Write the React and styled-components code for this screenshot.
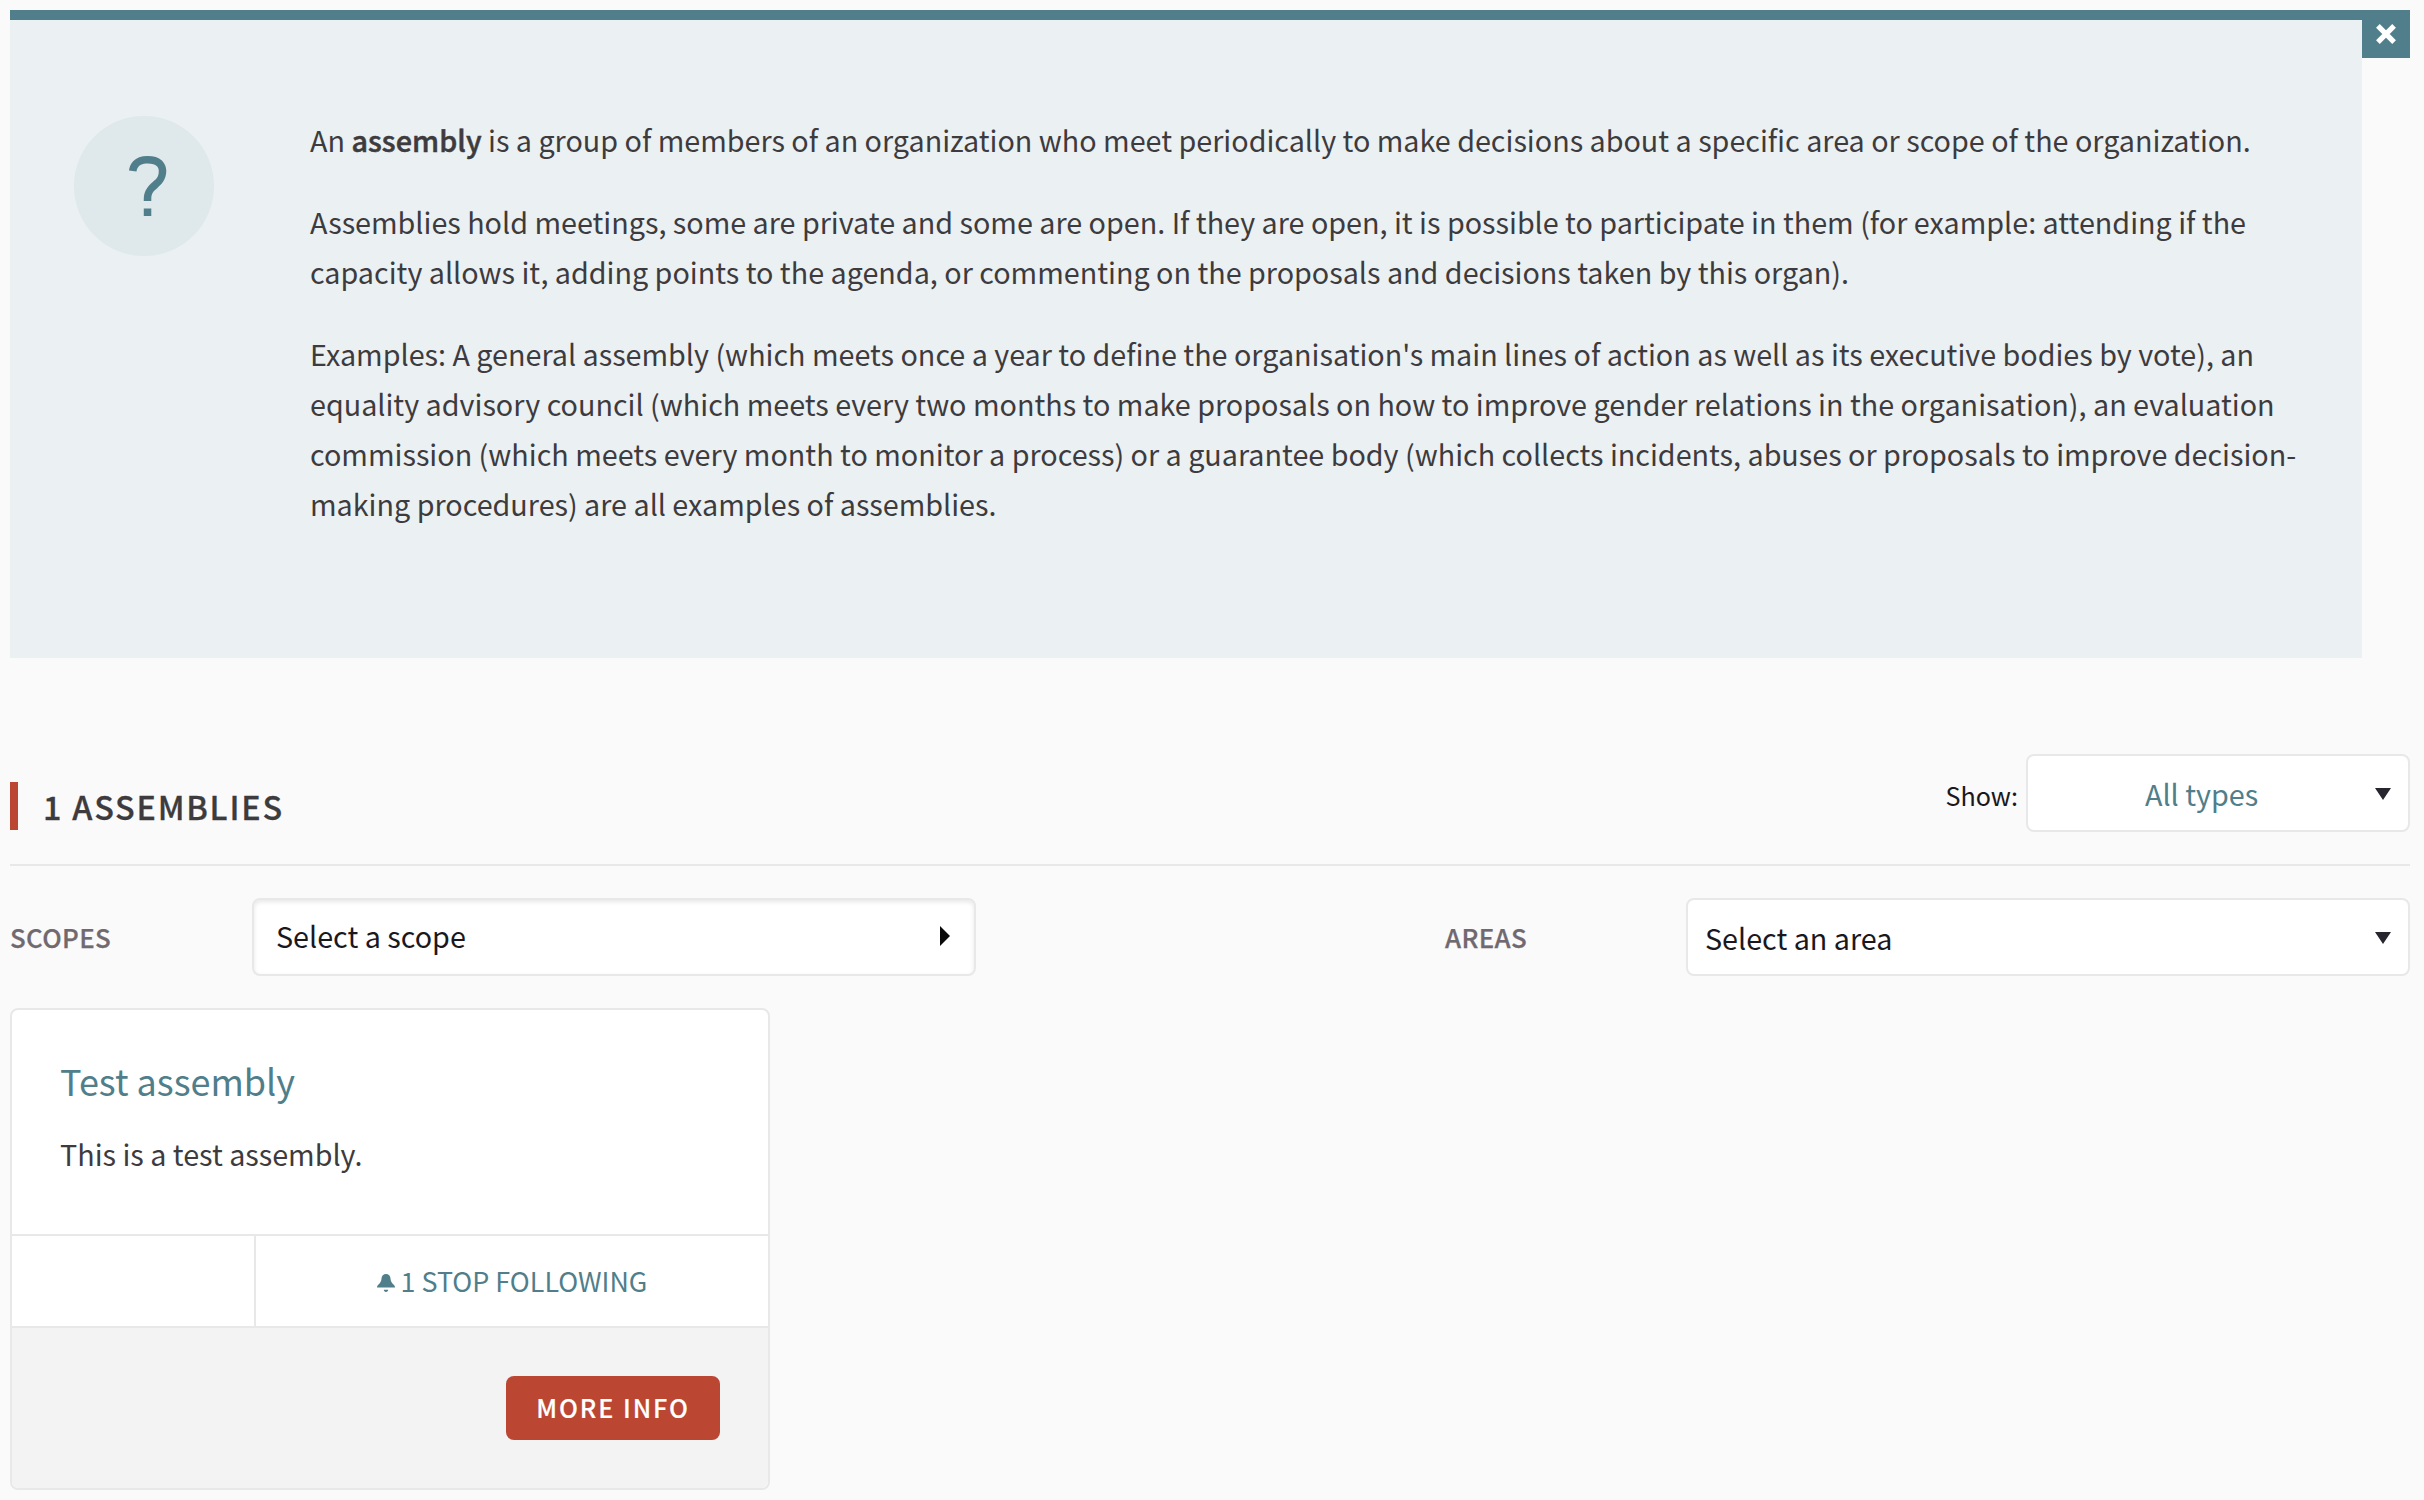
import React from 'react';
import styled, { createGlobalStyle } from 'styled-components';

const color = {
  page: '#fafafa',
  teal: '#507e8a',
  tint: '#ebf0f3',
  tintDark: '#dfe8ea',
  red: '#bb4632',
  text: '#3d3b3d',
  dark: '#1a181d',
  muted: '#716970',
  border: '#e8e8e8',
  footer: '#f3f3f3',
};

const GlobalStyle = createGlobalStyle`
  *, *::before, *::after { box-sizing: border-box; }
  body {
    margin: 0;
    background: ${color.page};
    color: ${color.text};
    font-family: "Noto Sans CJK SC", "Noto Sans", sans-serif;
    font-size: 28.72px;
    line-height: 50px;
  }
`;

const Page = styled.main`
  width: 2424px;
  height: 1500px;
  padding: 10px 14px 10px 10px;
  overflow: hidden;
`;

const Callout = styled.section`
  display: flex;
  align-items: flex-start;
  height: 648px;
`;

const CalloutBody = styled.div`
  display: flex;
  align-items: flex-start;
  width: 2352px;
  height: 648px;
  padding: 95px 56px 0 64px;
  border-top: 10px solid ${color.teal};
  background: ${color.tint};
`;

const CloseButton = styled.button`
  display: flex;
  align-items: flex-start;
  justify-content: center;
  width: 48px;
  height: 48px;
  padding: 14px 0 0;
  border: 0;
  background: ${color.teal};
`;

const HelpBadge = styled.div`
  display: flex;
  align-items: center;
  justify-content: center;
  flex: none;
  width: 140px;
  height: 140px;
  margin: 1px 96px 0 0;
  border-radius: 50%;
  background: ${color.tintDark};
  color: ${color.teal};
`;

const CalloutText = styled.div`
  flex: 1;
`;

const Paragraph = styled.p`
  margin: 0 0 32px;
`;

const Strong = styled.strong`
  font-weight: 500;
  letter-spacing: 0.06px;
  -webkit-text-stroke: 0.5px currentColor;
`;

const ListHeader = styled.header`
  display: flex;
  justify-content: space-between;
  align-items: flex-start;
  height: 112px;
  margin-top: 96px;
  border-bottom: 2px solid ${color.border};
`;

const Heading = styled.h2`
  margin: 28px 0 0;
  padding-left: 25px;
  border-left: 8px solid ${color.red};
  font-size: 32.3px;
  font-weight: 500;
  line-height: 48px;
  letter-spacing: 1.8px;
  text-transform: uppercase;
  -webkit-text-stroke: 0.3px currentColor;
`;

const TypeFilter = styled.div`
  display: flex;
  gap: 8px;
`;

const FilterCaption = styled.span`
  color: ${color.dark};
  font-size: 25.13px;
  line-height: 82px;
`;

const SelectBox = styled.div`
  display: flex;
  align-items: center;
  justify-content: space-between;
  width: ${(p) => p.$width}px;
  height: 78px;
  padding: 0 17px 0 ${(p) => (p.$centered ? 0 : 17)}px;
  border: 2px solid ${color.border};
  border-radius: 8px;
  background: #fff;
  color: ${(p) => (p.$centered ? color.teal : color.dark)};
`;

const SelectValue = styled.span`
  flex: 1;
  padding-top: 1px;
  text-align: ${(p) => (p.$centered ? 'center' : 'left')};
`;

const ScopeButton = styled(SelectBox)`
  padding: 0 24px 0 22px;
  box-shadow: inset 0 2px 4px rgba(26, 24, 29, 0.1);

  ${SelectValue} {
    padding: 0 0 2px;
  }
`;

const DownArrow = styled.svg`
  flex: none;
  width: 16px;
  height: 12px;
  margin-top: 2px;
`;

const RightArrow = styled.svg`
  flex: none;
  width: 10px;
  height: 20px;
  margin-bottom: 2px;
`;

const Filters = styled.div`
  display: grid;
  grid-template-columns: 242px 1193px 241px 724px;
  margin-top: 32px;
`;

const FilterLabel = styled.span`
  color: ${color.muted};
  font-size: 25.85px;
  font-weight: 500;
  line-height: 78px;
  letter-spacing: 0.35px;
  text-transform: uppercase;
  -webkit-text-stroke: 0.25px currentColor;
`;

const Card = styled.article`
  width: 760px;
  height: 482px;
  margin-top: 32px;
  border: 2px solid ${color.border};
  border-radius: 8px;
  background: #fff;
  overflow: hidden;
`;

const CardContent = styled.div`
  height: 224px;
  padding: 44px 48px 0;
`;

const CardTitle = styled.h3`
  margin: 0 0 23px;
  color: ${color.teal};
  font-size: 36px;
  font-weight: 400;
  line-height: 52px;
`;

const CardText = styled.p`
  margin: 0;
`;

const CardStatus = styled.div`
  display: grid;
  grid-template-columns: 244px 1fr;
  height: 94px;
  border: solid ${color.border};
  border-width: 2px 0;
`;

const StatusCell = styled.div`
  border-right: 2px solid ${color.border};
`;

const FollowButton = styled.div`
  display: flex;
  align-items: center;
  justify-content: center;
  gap: 6px;
  color: ${color.teal};
  font-size: 26.88px;
  line-height: 90px;
  text-transform: uppercase;
`;

const BellIcon = styled.svg`
  width: 18px;
  height: 18px;
  margin-top: 4px;
`;

const CardFooter = styled.footer`
  display: flex;
  justify-content: flex-end;
  height: 160px;
  padding: 48px;
  background: ${color.footer};
`;

const MoreButton = styled.a`
  width: 214px;
  height: 64px;
  border-radius: 8px;
  background: ${color.red};
  color: #fff;
  font-size: 25.13px;
  font-weight: 500;
  line-height: 62px;
  letter-spacing: 1.95px;
  text-align: center;
  text-transform: uppercase;
  -webkit-text-stroke: 0.2px currentColor;
`;

const Caret = () => (
  <DownArrow viewBox="0 0 16 12" aria-hidden="true">
    <path d="M0 0h16L8 12z" fill="#27252d" />
  </DownArrow>
);

export default function App() {
  return (
    <Page>
      <GlobalStyle />
      <Callout>
        <CalloutBody>
          <HelpBadge>
            <svg width="60" height="60" viewBox="0 0 8 8" fill="currentColor" aria-hidden="true">
              <path
                transform="translate(2)"
                d="M2.47 0c-.85 0-1.48.26-1.88.66-.4.4-.54.9-.59 1.28l1 .13c.04-.25.12-.5.31-.69.19-.19.49-.38 1.16-.38.66 0 1.02.16 1.22.34.2.18.28.4.28.66 0 .83-.34 1.06-.84 1.5-.5.44-1.16 1.08-1.16 2.25v.25h1v-.25c0-.83.31-1.06.81-1.5.5-.44 1.19-1.08 1.19-2.25 0-.48-.17-1.02-.59-1.41-.43-.39-1.07-.59-1.91-.59zm-.5 7v1h1v-1h-1z"
              />
            </svg>
          </HelpBadge>
          <CalloutText>
            <Paragraph>
              An <Strong>assembly</Strong> is a group of members of an organization who meet
              periodically to make decisions about a specific area or scope of the organization.
            </Paragraph>
            <Paragraph>
              Assemblies hold meetings, some are private and some are open. If they are open, it is
              possible to participate in them (for example: attending if the capacity allows it,
              adding points to the agenda, or commenting on the proposals and decisions taken by
              this organ).
            </Paragraph>
            <Paragraph>
              Examples: A general assembly (which meets once a year to define the organisation's
              main lines of action as well as its executive bodies by vote), an equality advisory
              council (which meets every two months to make proposals on how to improve gender
              relations in the organisation), an evaluation commission (which meets every month to
              monitor a process) or a guarantee body (which collects incidents, abuses or proposals
              to improve decision-making procedures) are all examples of assemblies.
            </Paragraph>
          </CalloutText>
        </CalloutBody>
        <CloseButton aria-label="Close">
          <svg width="20" height="20" viewBox="0 0 20 20" aria-hidden="true">
            <path d="M1.9 1.9l16.2 16.2M18.1 1.9L1.9 18.1" stroke="#fff" strokeWidth="5.2" />
          </svg>
        </CloseButton>
      </Callout>

      <ListHeader>
        <Heading>1 assemblies</Heading>
        <TypeFilter>
          <FilterCaption>Show:</FilterCaption>
          <SelectBox $width={384} $centered>
            <SelectValue $centered>All types</SelectValue>
            <Caret />
          </SelectBox>
        </TypeFilter>
      </ListHeader>

      <Filters>
        <FilterLabel>Scopes</FilterLabel>
        <ScopeButton $width={724}>
          <SelectValue>Select a scope</SelectValue>
          <RightArrow viewBox="0 0 10 20" aria-hidden="true">
            <path d="M0 0l10 10L0 20z" fill="#0a0a0a" />
          </RightArrow>
        </ScopeButton>
        <FilterLabel>Areas</FilterLabel>
        <SelectBox $width={724}>
          <SelectValue>Select an area</SelectValue>
          <Caret />
        </SelectBox>
      </Filters>

      <Card>
        <CardContent>
          <CardTitle>Test assembly</CardTitle>
          <CardText>This is a test assembly.</CardText>
        </CardContent>
        <CardStatus>
          <StatusCell />
          <FollowButton>
            <BellIcon viewBox="0 0 8 8" fill="currentColor" aria-hidden="true">
              <path d="M4 0c-1.1 0-2 .9-2 2 0 1.04-.52 1.98-1.34 2.66-.41.34-.66.82-.66 1.34h8c0-.52-.24-1-.66-1.34-.82-.68-1.34-1.62-1.34-2.66 0-1.1-.89-2-2-2zm-1 7c0 .55.45 1 1 1s1-.45 1-1h-2z" />
            </BellIcon>
            <span>1 Stop following</span>
          </FollowButton>
        </CardStatus>
        <CardFooter>
          <MoreButton>More info</MoreButton>
        </CardFooter>
      </Card>
    </Page>
  );
}
